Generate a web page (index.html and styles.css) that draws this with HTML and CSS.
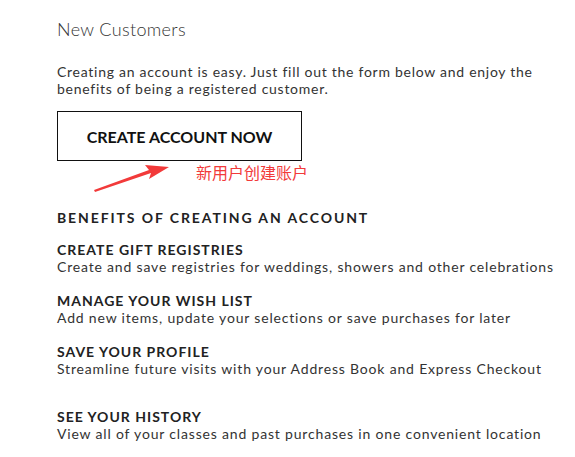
FILE: index.html
```html
<!DOCTYPE html>
<html>
<head>
<meta charset="utf-8">
<link rel="stylesheet" href="styles.css">
</head>
<body>
<div class="page">
  <h2 class="title">New Customers</h2>
  <p class="intro">Creating an account is easy. Just fill out the form below and enjoy the benefits of being a registered customer.</p>
  <div class="cta">
    <a class="btn" href="#">CREATE ACCOUNT NOW</a>
    <div class="note">
      <svg class="arrow" width="80" height="32" viewBox="0 0 80 32">
        <polygon points="2,29 58,10 56,16 76,4 52,2 56,7 1,27" fill="#f23a3a"/>
      </svg>
      <span class="cn">新用户创建账户</span>
    </div>
  </div>
  <h3 class="benefits">BENEFITS OF CREATING AN ACCOUNT</h3>
  <div class="item">
    <h4>CREATE GIFT REGISTRIES</h4>
    <p>Create and save registries for weddings, showers and other celebrations</p>
  </div>
  <div class="item">
    <h4>MANAGE YOUR WISH LIST</h4>
    <p>Add new items, update your selections or save purchases for later</p>
  </div>
  <div class="item">
    <h4>SAVE YOUR PROFILE</h4>
    <p>Streamline future visits with your Address Book and Express Checkout</p>
  </div>
  <div class="item last">
    <h4>SEE YOUR HISTORY</h4>
    <p>View all of your classes and past purchases in one convenient location</p>
  </div>
</div>
</body>
</html>
```
FILE: styles.css
```css
html, body {
  margin: 0;
  padding: 0;
  background: #fff;
}
.page {
  padding: 17px 0 0 57px;
  font-family: Lato, "Noto Sans", sans-serif;
  color: #222;
}
.title {
  margin: 0;
  font-size: 18px;
  font-weight: 300;
  letter-spacing: 0.35px;
  color: #333;
  line-height: 24px;
}
.intro {
  margin: 22px 0 0;
  font-size: 14px;
  line-height: 17px;
  letter-spacing: 0.73px;
  color: #333;
  width: 500px;
}
.cta {
  margin-top: 14px;
}
.btn {
  display: flex;
  align-items: center;
  justify-content: center;
  box-sizing: border-box;
  width: 245px;
  height: 50px;
  border: 1.5px solid #111;
  font-size: 16px;
  font-weight: 700;
  color: #111;
  text-decoration: none;
}
.note {
  display: flex;
  align-items: flex-start;
  height: 34px;
  padding-left: 36px;
}
.arrow {
  display: block;
  margin-top: 2px;
}
.cn {
  margin-left: 23px;
  margin-top: 2px;
  font-family: "Noto Sans CJK SC", sans-serif;
  font-size: 16px;
  line-height: 18px;
  color: #f23a3a;
  font-weight: 400;
}
.benefits {
  margin: 14px 0 0;
  font-size: 14px;
  font-weight: 700;
  letter-spacing: 1.9px;
  line-height: 18px;
}
.item {
  margin-top: 14px;
}
.item + .item {
  margin-top: 16px;
}
.item.last {
  margin-top: 30px;
}
.item h4 {
  margin: 0;
  font-size: 14px;
  font-weight: 700;
  letter-spacing: 1px;
  line-height: 17px;
}
.item p {
  margin: 0;
  font-size: 14px;
  line-height: 18px;
  letter-spacing: 0.82px;
  color: #333;
}
```
